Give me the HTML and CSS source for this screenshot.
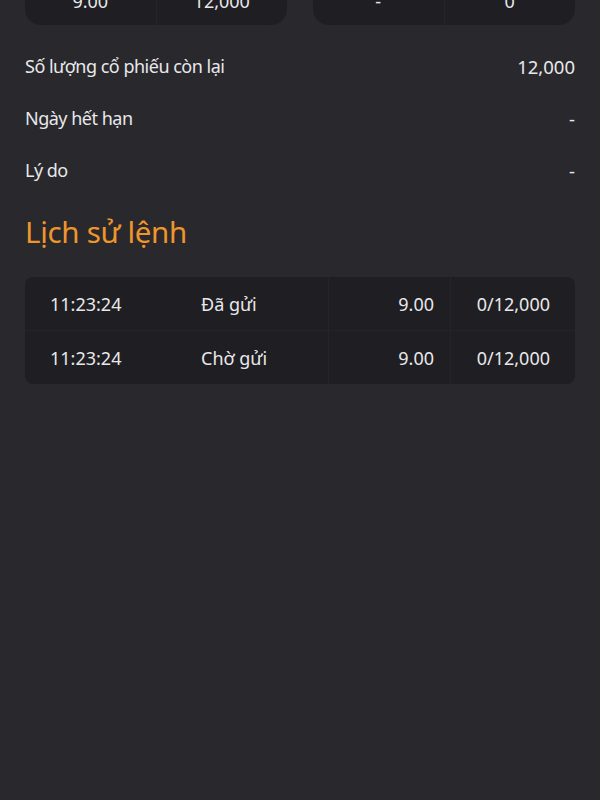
FILE: index.html
```html
<!DOCTYPE html>
<html>

<head>
    <meta charset="utf-8">
    <title>Chi tiết lệnh</title>
    <link rel="stylesheet" href="styles.css">
</head>

<body>
    <div class="page">
        <div class="summary">
            <div class="summary-card">
                <div class="summary-cell">9.00</div>
                <div class="summary-cell">12,000</div>
            </div>
            <div class="summary-card">
                <div class="summary-cell">-</div>
                <div class="summary-cell">0</div>
            </div>
        </div>

        <div class="info">
            <div class="info-row">
                <span class="info-label">Số lượng cổ phiếu còn lại</span>
                <span class="info-value">12,000</span>
            </div>
            <div class="info-row">
                <span class="info-label">Ngày hết hạn</span>
                <span class="info-value">-</span>
            </div>
            <div class="info-row">
                <span class="info-label">Lý do</span>
                <span class="info-value">-</span>
            </div>
        </div>

        <h2 class="section-title">Lịch sử lệnh</h2>

        <div class="history">
            <div class="history-row">
                <div class="cell time">11:23:24</div>
                <div class="cell status">Đã gửi</div>
                <div class="cell price">9.00</div>
                <div class="cell qty">0/12,000</div>
            </div>
            <div class="history-row">
                <div class="cell time">11:23:24</div>
                <div class="cell status">Chờ gửi</div>
                <div class="cell price">9.00</div>
                <div class="cell qty">0/12,000</div>
            </div>
        </div>
    </div>
</body>

</html>
```

FILE: styles.css
```css
body {
margin: 0;
background-color: #29282d;
color: #e8e8ea;
font-family: "Noto Sans", "Open Sans", sans-serif;
font-size: 18px;
}

.page {
padding: 0 25px;
}

/* cards cut off by the top of the screen */
.summary {
display: flex;
gap: 26px;
margin-top: -35px;
}

.summary-card {
flex: 1;
display: flex;
height: 60px;
background: #1f1e23;
border-radius: 16px;
overflow: hidden;
}

.summary-cell {
flex: 1;
display: flex;
align-items: flex-end;
justify-content: center;
padding-bottom: 12px;
line-height: 24px;
box-sizing: border-box;
}

.summary-cell + .summary-cell {
border-left: 1px solid #26252a;
}

.info {
margin-top: 15px;
}

.info-row {
display: flex;
justify-content: space-between;
align-items: center;
height: 52px;
}

.info-label {
letter-spacing: -0.5px;
}

.info-value {
font-size: 18.5px;
}

.section-title {
margin: 16px 0 25px;
font-size: 29.5px;
font-weight: normal;
line-height: 40px;
letter-spacing: -0.3px;
color: #ef962b;
}

.history {
background: #1f1e22;
border-radius: 8px;
overflow: hidden;
}

.history-row {
display: grid;
grid-template-columns: 151px 152px 122px 125px;
height: 53px;
}

.history-row + .history-row {
border-top: 1px solid #252429;
}

.cell {
display: flex;
align-items: center;
}

.time {
padding-left: 25px;
}

.status {
padding-left: 25px;
}

.price {
justify-content: flex-end;
padding-right: 16px;
border-left: 1px solid #252429;
}

.qty {
justify-content: flex-end;
padding-right: 25px;
border-left: 1px solid #252429;
}
```
